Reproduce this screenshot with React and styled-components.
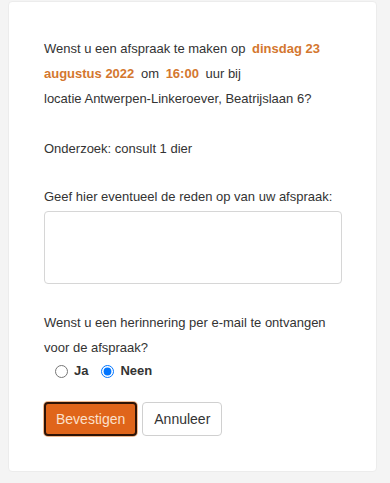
import styled, { createGlobalStyle } from 'styled-components';

const Global = createGlobalStyle`
  body {
    margin: 0;
    background: #f4f4f4;
    font-family: "Liberation Sans", Arial, sans-serif;
    color: #333;
  }
`

const App = () => {
  return (
    <>
      <Global />
      <Page>
        <Card>
          <Body>
            <Text>
              Wenst u een afspraak te maken op <Hl>dinsdag 23 augustus 2022</Hl> om <Hl>16:00</Hl> uur bij
              <br />
              locatie Antwerpen-Linkeroever, Beatrijslaan 6?
            </Text>
            <Text>Onderzoek: consult 1 dier</Text>
            <Field>
              <Label>Geef hier eventueel de reden op van uw afspraak:</Label>
              <Area />
            </Field>
            <Text>Wenst u een herinnering per e-mail te ontvangen voor de afspraak?</Text>
            <Radios>
              <RadioLabel><input type="radio" name="mail" /> Ja</RadioLabel>
              <RadioLabel><input type="radio" name="mail" defaultChecked /> Neen</RadioLabel>
            </Radios>
          </Body>
          <Footer>
            <Button primary>Bevestigen</Button>
            <Button>Annuleer</Button>
          </Footer>
        </Card>
      </Page>
    </>
  )
}

const Page = styled.div`
  padding: 1px 13px 11px 8px;
`

const Card = styled.div`
  background: #fff;
  border: 1px solid #ececec;
  border-radius: 4px;
  padding: 34px 35px 35px 35px;
`

const Body = styled.div`
  display: flex;
  flex-direction: column;
  gap: 25px;
`

const Text = styled.p`
  margin: 0;
  font-size: 13px;
  line-height: 25px;
`

const Hl = styled.span`
  color: #d4772f;
  font-weight: bold;
  padding: 0 3px;
`

const Field = styled.div`
  display: flex;
  flex-direction: column;
  gap: 3px;
`

const Label = styled.label`
  font-size: 13px;
  line-height: 22px;
`

const Area = styled.textarea`
  width: 298px;
  height: 73px;
  box-sizing: border-box;
  border: 1px solid #d6d6d6;
  border-radius: 4px;
  resize: none;
  margin: 0 0 1px 0;
`

const Radios = styled.div`
  display: flex;
  gap: 10px;
  margin: -24px 0 0 8px;
`

const RadioLabel = styled.label`
  display: flex;
  align-items: center;
  gap: 3px;
  font-size: 13px;
  font-weight: bold;
  line-height: 20px;

  input {
    margin: 0 3px 0 3px;
    width: 13px;
    height: 13px;
  }
`

const Footer = styled.div`
  display: flex;
  gap: 5px;
  margin-top: 21px;
`

const Button = styled.button`
  font-family: "Liberation Sans", Arial, sans-serif;
  font-size: 14px;
  height: 34px;
  padding: ${p => p.primary ? '0 10px' : '0 11px'};
  border-radius: 4px;
  cursor: pointer;
  background: ${p => p.primary ? '#e0651a' : '#fff'};
  color: ${p => p.primary ? '#fbe0cb' : '#333'};
  border: ${p => p.primary ? '2px solid #2e1306' : '1px solid #d0d0d0'};
  box-shadow: ${p => p.primary ? '0 0 0 1px #f0b98f' : 'none'};
`

export default App;
